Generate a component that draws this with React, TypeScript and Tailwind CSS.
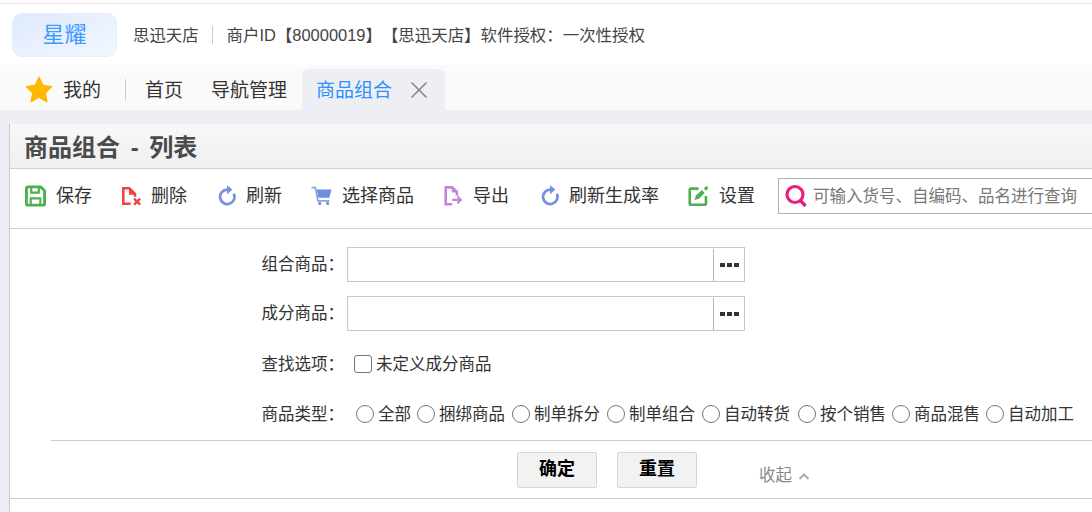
import React from 'react';
import { X } from 'lucide-react';

const FONT = "font-['Liberation_Sans','Noto_Sans_CJK_SC',sans-serif]";

const SaveIcon = () => (
  <svg width="22" height="22" viewBox="0 0 22 22" fill="none">
    <path d="M3 1.500H16.500L20.500 5.500V19a1.500 1.500 0 0 1-1.500 1.500H3A1.500 1.500 0 0 1 1.500 19V3A1.500 1.500 0 0 1 3 1.500Z" stroke="#4caf50" strokeWidth="3" strokeLinejoin="round" />
    <path d="M6.500 2v5.500h8V2" stroke="#4caf50" strokeWidth="2.200" />
    <path d="M6 20v-6.500h10V20" stroke="#4caf50" strokeWidth="2.200" />
  </svg>
);

const DeleteIcon = () => (
  <svg width="22" height="22" viewBox="0 0 22 22" fill="none">
    <path d="M10 20H1.500V2H8.500L15 8.500V12" stroke="#ef4444" strokeWidth="3" />
    <path d="M8 1.500V9.500H16Z" fill="#ef4444" />
    <path d="M14 14l7 7m0-7l-7 7" stroke="#ef4444" strokeWidth="2.800" />
  </svg>
);

const RefreshIcon = () => (
  <svg width="20" height="24" viewBox="0 0 20 24" fill="none">
    <path d="M17.500 9.500A8 8 0 1 1 10.300 5" stroke="#7391de" strokeWidth="3" />
    <path d="M10 0L16 4.800 10 10Z" fill="#7391de" />
  </svg>
);

const CartIcon = () => (
  <svg width="24" height="22" viewBox="0 0 24 22" fill="none">
    <path d="M0.500 1.500h4.500l3 15h13" stroke="#8aa3e6" strokeWidth="2" />
    <path d="M6.500 3.500H23.500l-2.500 9.500H8.500Z" fill="#6f8fdc" />
    <circle cx="10" cy="19.500" r="1.800" fill="#6f8fdc" />
    <circle cx="19" cy="19.500" r="1.800" fill="#6f8fdc" />
  </svg>
);

const ExportIcon = () => (
  <svg width="22" height="24" viewBox="0 0 22 24" fill="none">
    <path d="M9.500 21.500H2V2H9.500L15 7.500V11.500" stroke="#c583e0" strokeWidth="3" />
    <path d="M9 1.500V8H15.500Z" fill="#c583e0" />
    <path d="M9.500 16.500h10m-4-4l4 4-4 4" stroke="#c583e0" strokeWidth="2.400" />
  </svg>
);

const SettingIcon = () => (
  <svg width="24" height="24" viewBox="0 0 24 24" fill="none">
    <path d="M12 3.500H3.500A1.500 1.500 0 0 0 2 5V20.500A1.500 1.500 0 0 0 3.500 22H19A1.500 1.500 0 0 0 20.500 20.500V12" stroke="#4caf50" strokeWidth="3" strokeLinejoin="round" />
    <path d="M7.500 16.500L9 11.500 16 5l3 3.500L12.500 15Z" fill="#4caf50" />
    <path d="M18 3.500L20 1.500a1.500 1.500 0 0 1 2.500 2.500L20.500 6Z" fill="#4caf50" />
  </svg>
);

const SearchIcon = () => (
  <svg width="24" height="24" viewBox="0 0 24 24" fill="none">
    <circle cx="11" cy="10.500" r="8" stroke="#e91e7e" strokeWidth="3.200" />
    <path d="M16 16l5.500 6" stroke="#e91e7e" strokeWidth="3.400" />
  </svg>
);

const StarIcon = () => (
  <svg width="28" height="28" viewBox="0 0 28 28">
    <path d="M14 1.500l3.900 8 8.600 1.200-6.300 6 1.600 8.800L14 21.200l-7.800 4.300 1.600-8.800-6.300-6 8.600-1.200Z" fill="#ffb800" stroke="#ffb800" strokeWidth="1.500" strokeLinejoin="round" />
  </svg>
);

const TOOLS = [
  { label: '保存', icon: <SaveIcon />, cls: 'w-[95px]', off: 'pl-[1px]' },
  { label: '删除', icon: <DeleteIcon />, cls: 'w-[95px]', off: 'pl-[3px]' },
  { label: '刷新', icon: <RefreshIcon />, cls: 'w-[96px]', off: 'pl-[4px]' },
  { label: '选择商品', icon: <CartIcon />, cls: 'w-[131px]', off: 'pl-[1px]' },
  { label: '导出', icon: <ExportIcon />, cls: 'w-[96px]', off: 'pl-[3px]' },
  { label: '刷新生成率', icon: <RefreshIcon />, cls: 'w-[150px]', off: 'pl-[4px]' },
  { label: '设置', icon: <SettingIcon />, cls: 'w-[91px]', off: 'pl-[1px]' },
];

const TYPES = [
  { label: '全部', cls: 'w-[61px]' },
  { label: '捆绑商品', cls: 'w-[95px]' },
  { label: '制单拆分', cls: 'w-[95px]' },
  { label: '制单组合', cls: 'w-[95px]' },
  { label: '自动转货', cls: 'w-[96px]' },
  { label: '按个销售', cls: 'w-[94px]' },
  { label: '商品混售', cls: 'w-[94px]' },
  { label: '自动加工', cls: 'w-[95px]' },
];

function PickerField({ label, className }: { label: string; className: string }) {
  return (
    <div className={`flex items-center ${className}`}>
      <label className="w-[335px] pr-[1px] text-right text-[16.5px] text-[#333]">{label}：</label>
      <div className="ml-[2px] flex h-[35px] w-[398px] items-center border border-[#c8c8c8]">
        <div className="flex-1" />
        <div className="flex h-[32px] w-[31px] items-center justify-center gap-[2px] border-l border-[#b5b5b5]">
          <span className="h-[4px] w-[5px] bg-[#333]" />
          <span className="h-[4px] w-[5px] bg-[#333]" />
          <span className="h-[4px] w-[5px] bg-[#333]" />
        </div>
      </div>
    </div>
  );
}

export default function App() {
  return (
    <div className={`h-[512px] w-[1092px] overflow-hidden bg-white [text-spacing-trim:space-all] ${FONT}`}>
      {/* Top bar */}
      <header className="mt-[3px] flex h-[62px] items-center border-t border-[#e4e4e4] bg-white pl-[12px]">
        <div className="flex h-[44px] w-[105px] items-center justify-center rounded-[10px] border border-[#e6eefb] bg-gradient-to-br from-[#dfeafc] to-[#f3f7ff] text-[22px] text-[#3f9bff]">
          星耀
        </div>
        <span className="ml-[16px] pt-[1px] text-[16.4px] text-[#444]">思迅天店</span>
        <span className="ml-[13px] h-[18px] w-px bg-[#ccc]" />
        <span className="ml-[14px] pt-[1px] text-[16.45px] text-[#444]">商户ID【80000019】【思迅天店】软件授权：一次性授权</span>
      </header>

      {/* Tabs */}
      <nav className="flex h-[45px] items-end bg-[#fafafa] text-[19px] text-[#333]">
        <div className="flex h-[41px] items-center pl-[25px]">
          <StarIcon />
          <span className="ml-[10px] pt-[4px]">我的</span>
          <span className="ml-[24px] h-[22px] w-px bg-[#ccc]" />
          <span className="ml-[19px] pt-[4px]">首页</span>
          <span className="ml-[28px] pt-[4px]">导航管理</span>
        </div>
        <div className="ml-[15px] flex h-[41px] w-[143px] items-center rounded-t-[8px] bg-[#eeeff4] pl-[14px] text-[#2f8fff]">
          <span className="pt-[4px]">商品组合</span>
          <X size={28} strokeWidth={1.3} className="ml-[13px] shrink-0 text-[#888]" />
        </div>
      </nav>

      {/* Page body */}
      <main className="h-[402px] bg-[#eeeff4] pt-[14px] pl-[9px]">
        <section className="h-[388px] border-l border-[#c8c8c8] bg-white">
          <h1 className="flex h-[45px] items-center border-b border-[#d0d0d0] bg-gradient-to-b from-[#f8f8f8] to-[#efefef] pt-[3px] pl-[14px] text-[24px] leading-none font-bold text-[#4a4a4a] [word-spacing:4px]">
            商品组合 - 列表
          </h1>

          <div className="flex h-[60px] items-center border-b border-[#d0d0d0] pb-[5px] pl-[14px] text-[18px] text-[#333]">
            {TOOLS.map(t => (
              <div key={t.label} className={`flex shrink-0 items-center gap-[10px] ${t.cls}`}>
                <span className={`flex w-[22px] justify-start ${t.off}`}>{t.icon}</span>
                <span>{t.label}</span>
              </div>
            ))}
            <div className="flex h-[36px] w-[340px] shrink-0 items-center border border-[#b4b4b4] pl-[5px] text-[#777]">
              <SearchIcon />
              <span className="ml-[5px] whitespace-nowrap text-[16.5px]">可输入货号、自编码、品名进行查询</span>
            </div>
          </div>

          <PickerField label="组合商品" className="pt-[18px]" />
          <PickerField label="成分商品" className="pt-[14px]" />

          <div className="flex items-center pt-[21px] text-[16.5px] text-[#333]">
            <label className="w-[335px] pr-[1px] text-right">查找选项：</label>
            <span className="ml-[9px] h-[18px] w-[18px] rounded-[3px] border border-[#777]" />
            <span className="ml-[4px]">未定义成分商品</span>
          </div>

          <div className="flex items-center pt-[25px] text-[16.5px] text-[#333]">
            <label className="w-[335px] pr-[1px] text-right">商品类型：</label>
            <div className="ml-[11px] flex">
              {TYPES.map(t => (
                <div key={t.label} className={`flex items-center gap-[4px] whitespace-nowrap ${t.cls}`}>
                  <span className="h-[18px] w-[18px] shrink-0 rounded-full border border-[#777]" />
                  <span>{t.label}</span>
                </div>
              ))}
            </div>
          </div>

          <div className="mt-[13px] ml-[41px] border-t border-[#ccc]" />

          <div className="flex h-[58px] items-center border-b border-[#ccc] pt-[1px] pl-[507px]">
            <button className="h-[36px] w-[80px] rounded-[2px] border border-[#d5d5d5] bg-[#f2f2f2] text-[18px] font-bold text-black">确定</button>
            <button className="ml-[20px] h-[36px] w-[80px] rounded-[2px] border border-[#d5d5d5] bg-[#f2f2f2] text-[18px] font-bold text-black">重置</button>
            <span className="mt-[12px] ml-[62px] text-[16.5px] text-[#888]">收起</span>
            <svg className="mt-[12px] ml-[6px]" width="12" height="8" viewBox="0 0 12 8" fill="none">
              <path d="M1.500 7L6 2.500 10.500 7" stroke="#aaa" strokeWidth="2" />
            </svg>
          </div>
        </section>
      </main>
    </div>
  );
}
